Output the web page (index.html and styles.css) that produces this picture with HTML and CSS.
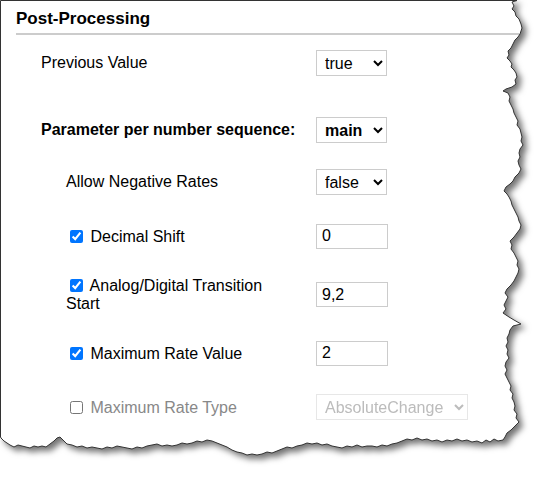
FILE: index.html
```html
<!DOCTYPE html>
<html lang="en">
<head>
    <meta charset="UTF-8">
    <meta name="viewport" content="width=device-width, initial-scale=1.0">
    <title>Post-Processing</title>
    <link rel="stylesheet" href="styles.css">
</head>
<body>
    <div class="sheet">
        <!-- torn paper outline, drawn behind the form -->
        <svg class="paper" width="546" height="477" viewBox="0 0 546 477">
            <path d="M0.5,0.5 L517,0.5 L512,2 L514,6 L512,9 L515,12 L516,16 L519,19 L521,24 L522,28 L521,31 L520,34 L518,37 L515,40 L513,44 L511,48 L508,51 L509,55 L507,58 L510,61 L512,64 L511,67 L514,70 L516,73 L517,77 L515,80 L516,84 L512,87 L506,89 L503,91 L508,93 L510,97 L509,101 L511,105 L513,109 L514,113 L516,117 L518,121 L517,125 L520,129 L521,133 L522,137 L521,141 L523,145 L520,149 L519,153 L520,157 L518,161 L519,165 L521,169 L519,173 L515,177 L513,181 L510,184 L506,187 L504,191 L507,194 L509,197 L511,201 L512,205 L514,209 L516,213 L518,217 L519,221 L521,225 L520,229 L517,233 L514,237 L510,241 L512,245 L511,249 L514,253 L516,257 L518,261 L517,265 L519,269 L518,273 L516,277 L514,281 L511,285 L507,289 L505,293 L508,297 L506,301 L504,305 L506,309 L503,313 L509,317 L514,320 L521,324 L513,326 L510,330 L509,334 L507,338 L508,342 L506,346 L508,350 L507,354 L509,358 L506,362 L505,366 L507,370 L505,374 L507,378 L509,382 L511,386 L510,390 L513,394 L512,398 L514,402 L515,406 L514,410 L517,414 L516,418 L519,422 L515,426 L511,430 L507,433 L505,437 L503,440 L498,441 L494,439 L490,442 L486,440 L482,443 L477,441 L472,442 L467,440 L462,441 L457,439 L452,441 L447,440 L442,442 L437,440 L432,441 L427,439 L422,440 L417,438 L412,440 L407,439 L402,441 L397,443 L392,444 L387,446 L382,445 L377,447 L372,446 L367,446 L362,447 L357,445 L352,447 L347,446 L342,448 L337,447 L332,446 L327,444 L322,445 L317,443 L312,444 L307,443 L302,445 L297,446 L292,448 L287,447 L282,449 L277,451 L272,453 L267,452 L262,454 L257,455 L252,454 L247,455 L242,453 L237,452 L232,450 L227,447 L222,445 L217,443 L212,441 L207,440 L202,442 L197,441 L192,443 L187,444 L182,443 L177,445 L172,446 L167,445 L162,446 L157,444 L152,445 L147,446 L142,448 L137,447 L132,449 L127,448 L122,447 L117,446 L112,448 L107,447 L102,449 L97,448 L92,447 L87,448 L82,446 L77,447 L72,445 L67,444 L63,440 L60,437 L57,438 L54,441 L50,444 L46,447 L42,446 L38,447 L34,446 L30,448 L26,447 L22,446 L18,445 L14,447 L10,445 L7,443 L4,441 L1,438 L0.5,437 Z"/>
        </svg>

        <div class="content">
            <h2 class="section-title">Post-Processing</h2>

            <div class="row first">
                <label class="name">Previous Value</label>
                <select class="choice">
                    <option>true</option>
                    <option>false</option>
                </select>
            </div>

            <div class="row head">
                <label class="name strong">Parameter per number sequence:</label>
                <select class="choice strong">
                    <option>main</option>
                </select>
            </div>

            <!-- settings of the selected number sequence -->
            <div class="group">
                <div class="row">
                    <label class="name">Allow Negative Rates</label>
                    <select class="choice">
                        <option>false</option>
                        <option>true</option>
                    </select>
                </div>

                <div class="row">
                    <label class="name"><input type="checkbox" checked> Decimal Shift</label>
                    <input type="text" class="value" value="0">
                </div>

                <div class="row">
                    <label class="name"><input type="checkbox" checked> Analog/Digital Transition Start</label>
                    <input type="text" class="value" value="9,2">
                </div>

                <div class="row">
                    <label class="name"><input type="checkbox" checked> Maximum Rate Value</label>
                    <input type="text" class="value" value="2">
                </div>

                <div class="row">
                    <label class="name off"><input type="checkbox"> Maximum Rate Type</label>
                    <select class="choice wide" disabled>
                        <option>AbsoluteChange</option>
                        <option>RateChange</option>
                    </select>
                </div>
            </div>
        </div>
    </div>
</body>
</html>
```

FILE: styles.css
```css
body {
    margin: 0;
    background: #fff;
    font-family: "Liberation Sans", Arial, sans-serif;
    font-size: 16px;
    color: #000;
}

.sheet {
    position: relative;
    width: 546px;
    height: 477px;
    overflow: hidden;
}

.paper {
    position: absolute;
    left: 0;
    top: 0;
    z-index: 0;
    filter: drop-shadow(4px 4px 3px rgba(0,0,0,0.55));
}

.paper path {
    fill: #fff;
    stroke: #333;
    stroke-width: 1;
}

.content {
    position: relative;
    z-index: 1;
    width: 503px;
    padding-left: 16px;
}

.section-title {
    margin: 9px 0 0;
    padding-bottom: 4px;
    font-size: 17px;
    line-height: 20px;
    font-weight: bold;
    border-bottom: 2px solid #ccc;
}

.row {
    display: grid;
    grid-template-columns: 250px auto;
    column-gap: 25px;
    align-items: center;
    min-height: 28px;
    padding-left: 25px;
}

.row.first {
    margin-top: 14px;
}

.row.head {
    margin-top: 39px;
}

.row.head .name {
    white-space: nowrap;
}

.group {
    margin-top: 24px;
}

.group .row + .row {
    margin-top: 26px;
}

.group .name {
    padding-left: 25px;
}

.name input[type="checkbox"] {
    margin: 3px 3px 3px 4px;
    vertical-align: -1px;
}

.strong {
    font-weight: bold;
}

.off {
    color: #888;
}

.choice {
    justify-self: start;
    width: 71px;
    height: 26px;
    padding: 0 4px;
    font-family: inherit;
    font-size: 16px;
    color: #000;
    background: #fff;
    border: 1px solid #ccc;
    border-radius: 0;
}

.choice.strong {
    font-weight: bold;
}

.choice.wide {
    width: 152px;
}

.choice:disabled {
    color: #a0a0a0;
    border-color: #ddd;
}

.value {
    justify-self: start;
    box-sizing: border-box;
    width: 72px;
    height: 25px;
    padding: 0 5px;
    font-family: inherit;
    font-size: 16px;
    color: #000;
    border: 1px solid #ccc;
    border-radius: 0;
}
```
